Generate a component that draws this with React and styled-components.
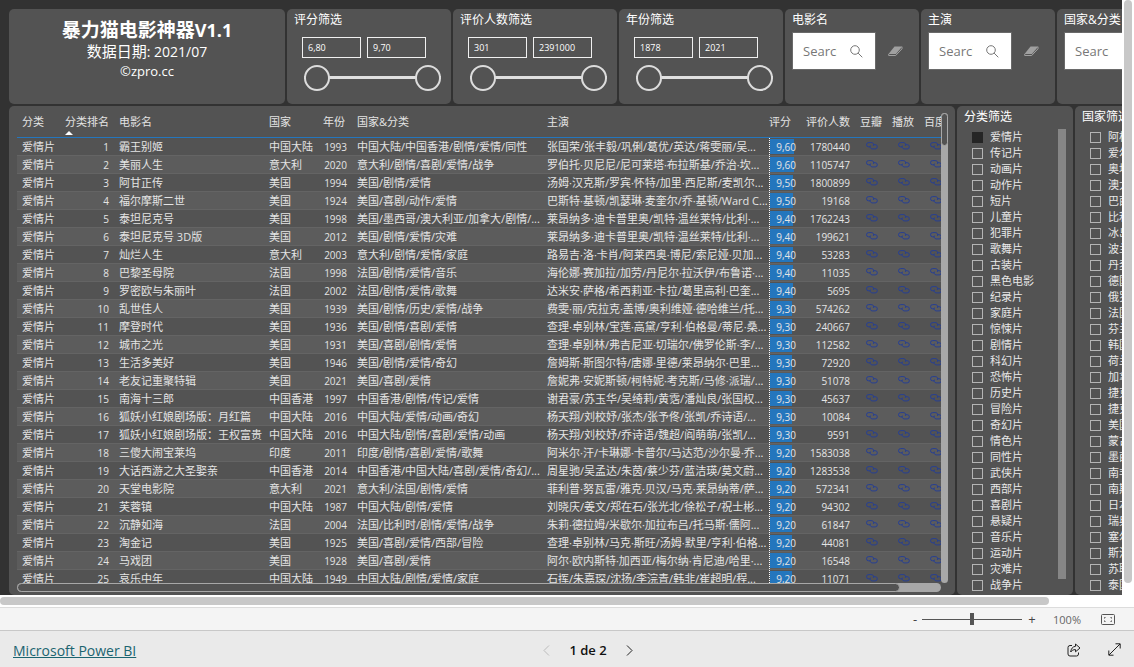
import React, { useState } from 'react'
import styled, { createGlobalStyle } from 'styled-components'

const GlobalStyle = createGlobalStyle`
  * {
    box-sizing: border-box;
  }
  body {
    margin: 0;
    background: #ffffff;
    font-family: "Open Sans", "Noto Sans CJK SC", sans-serif;
    color: #ffffff;
  }
  button, input {
    font-family: inherit;
  }
`;

const Page = styled.div`
  height: 100vh;
  display: flex;
  flex-direction: column;
  overflow: hidden;
`;

const Viewport = styled.div`
  flex: 1;
  min-height: 0;
  display: grid;
  grid-template-columns: minmax(0, 1fr) 12px;
  grid-template-rows: minmax(0, 1fr) 12px;
`;

const Canvas = styled.main`
  overflow: hidden;
  background: #323232;
`;

const Report = styled.div`
  width: 1200px;
  height: 100%;
  padding: 9px 9px 0;
  display: flex;
  flex-direction: column;
  gap: 2px;
`;

const PageScrollY = styled.div`
  width: 8px;
  height: 98%;
  margin-left: 2px;
  border-radius: 4px;
  background: #c8c8c8;
`;

const PageScrollX = styled.div`
  height: 8px;
  margin: 2px 73px 0 0;
  border-radius: 4px;
  background: #c8c8c8;
`;

const TopRow = styled.div`
  display: flex;
  gap: 2px;
  height: 95px;
`;

const BottomRow = styled.div`
  flex: 1;
  min-height: 0;
  display: flex;
  gap: 2px;
`;

const Panel = styled.section`
  flex: none;
  width: ${({ $width }) => $width}px;
  border-radius: 5px;
  background: #535353;
  overflow: hidden;
`;

const PanelTitle = styled.h2`
  margin: 0;
  padding: 2px 7px 0;
  font-size: 12px;
  line-height: 18px;
  font-weight: 400;
  white-space: nowrap;
`;

const TitlePanel = styled(Panel)`
  padding-top: 10px;
  text-align: center;
`;

const Title = styled.h1`
  margin: 0;
  font-size: 19px;
  line-height: 22px;
  font-weight: 700;
`;

const DateLine = styled.div`
  font-size: 15px;
  line-height: 20px;
`;

const Latin = styled.span`
  font-size: ${({ $size }) => $size}px;
`;

const Author = styled.div`
  font-size: 13px;
  line-height: 18px;
`;

const RangeBody = styled.div`
  padding: 8px 10px 0 15px;
`;

const RangeInputs = styled.div`
  display: flex;
  gap: 6px;
`;

const NumberBox = styled.input`
  width: 59px;
  height: 21px;
  padding: 0 5px;
  border: 1px solid #f0f0f0;
  border-radius: 0;
  background: transparent;
  color: #ffffff;
  font-size: 9px;
  outline: none;
`;

const DualSlider = styled.div`
  display: grid;
  margin: 7px 0 0 2px;
`;

const Range = styled.input`
  grid-area: 1 / 1;
  appearance: none;
  width: 100%;
  height: 26px;
  margin: 0;
  background: ${({ $line }) => ($line ? 'linear-gradient(#e0e0e0, #e0e0e0) no-repeat 0 11px / 100% 3px' : 'transparent')};
  pointer-events: none;
  &::-webkit-slider-thumb {
    appearance: none;
    width: 26px;
    height: 26px;
    border: 2px solid #dcdcdc;
    border-radius: 50%;
    background: #535353;
    pointer-events: auto;
  }
`;

const SearchRow = styled.div`
  display: flex;
  align-items: center;
  gap: 12px;
  padding: 3px 0 0 7px;
`;

const SearchBox = styled.div`
  display: flex;
  align-items: center;
  width: 84px;
  height: 38px;
  padding: 0 12px 0 10px;
  border: 1px solid #6a6a6a;
  background: #ffffff;
`;

const SearchInput = styled.input`
  flex: 1;
  width: 34px;
  min-width: 0;
  margin-right: 13px;
  padding: 0;
  border: 0;
  background: transparent;
  color: #333333;
  font-size: 13px;
  outline: none;
  &::placeholder {
    color: #777777;
  }
`;

const IconButton = styled.button`
  display: flex;
  padding: 0;
  border: 0;
  background: none;
  color: ${({ $color }) => $color || '#222222'};
  cursor: pointer;
`;

const TablePanel = styled(Panel)`
  display: grid;
  grid-template-columns: minmax(0, 1fr) 7px;
  grid-template-rows: minmax(0, 1fr) 9px;
  padding: 7px 7px 3px 8px;
`;

const TableClip = styled.div`
  overflow: hidden;
`;

const Table = styled.table`
  width: 934px;
  table-layout: fixed;
  border-collapse: separate;
  border-spacing: 0;
  font-size: 11px;
  color: #e4e4e4;
`;

const HeadCell = styled.th`
  height: 25px;
  padding: 0 0 0 5px;
  border-bottom: 1px solid #2476bd;
  line-height: 18px;
  font-weight: 400;
  text-align: left;
  vertical-align: top;
  white-space: nowrap;
`;

const SortArrow = styled.span`
  display: block;
  width: 8px;
  border: 4px solid transparent;
  border-top: 0;
  border-bottom-color: #ffffff;
`;

const Row = styled.tr`
  background: ${({ $even }) => ($even ? '#5c5c5c' : '#535353')};
`;

const Cell = styled.td`
  height: 18px;
  padding: 1px 5px 0;
  border-bottom: 1px solid #646464;
  line-height: 16px;
  white-space: nowrap;
`;

const NumCell = styled(Cell)`
  font-size: 10px;
  text-align: right;
`;

const RateCell = styled(NumCell)`
  padding-top: 0;
`;

const DataBar = styled.div`
  height: 17px;
  padding-top: 1px;
  border-left: 1px dotted #ffffff;
  background: linear-gradient(#2476bd, #2476bd) no-repeat 0 1px / ${({ $fill }) => $fill}px 15px;
`;

const IconCell = styled(Cell)`
  padding: 0 0 0 11px;
`;

const IconLink = styled.a`
  display: flex;
  height: 17px;
  padding-top: 4px;
  color: #263f95;
`;

const TableScrollY = styled.div`
  border-radius: 4px;
  background: #a8a8a8;
`;

const ThumbY = styled.div`
  height: 33px;
  border: 1px solid #a8a8a8;
  border-radius: 4px;
  background: #535353;
`;

const TableScrollX = styled.div`
  border-radius: 5px;
  background: #a8a8a8;
`;

const ThumbX = styled.div`
  width: 883px;
  height: 9px;
  border: 1px solid #a8a8a8;
  border-radius: 5px;
  background: #535353;
`;

const ListBody = styled.div`
  display: flex;
  justify-content: space-between;
  padding: 3px 7px 0 15px;
`;

const CheckList = styled.ul`
  margin: 0;
  padding: 0;
  list-style: none;
`;

const CheckItem = styled.label`
  display: flex;
  align-items: center;
  gap: 7px;
  height: 16px;
  color: #e8e8e8;
  font-size: 11px;
  line-height: 16px;
  white-space: nowrap;
`;

const CheckBox = styled.input`
  appearance: none;
  width: 11px;
  height: 11px;
  margin: 0;
  border: 1px solid #b4b4b4;
  &:checked {
    border-color: #252525;
    background: #252525;
  }
`;

const ListScroll = styled.div`
  width: 8px;
  height: 450px;
  background: #868686;
`;

const StatusBar = styled.div`
  display: flex;
  align-items: center;
  justify-content: flex-end;
  height: 24px;
  padding-right: 19px;
  border-top: 1px solid #dcdcdc;
  border-bottom: 1px solid #c8c8c8;
  background: #f4f4f4;
  color: #555555;
`;

const ZoomButton = styled.button`
  width: 14px;
  padding: 0;
  border: 0;
  background: none;
  color: #444444;
  font-size: 13px;
  line-height: 16px;
`;

const ZoomRange = styled.input`
  appearance: none;
  width: 100px;
  height: 12px;
  margin: 0 3px 0 0;
  background: linear-gradient(#555555, #555555) no-repeat 0 6px / 100% 1px;
  &::-webkit-slider-thumb {
    appearance: none;
    width: 4px;
    height: 12px;
    background: #555555;
  }
`;

const ZoomValue = styled.span`
  width: 48px;
  padding-left: 14px;
  margin-right: 14px;
  color: #666666;
  font-size: 11px;
`;

const Footer = styled.footer`
  display: grid;
  grid-template-columns: 1fr auto 1fr;
  align-items: center;
  height: 36px;
  padding: 2px 13px 0;
  background: #eaeaea;
  color: #111111;
`;

const BrandLink = styled.a`
  color: #1b6470;
  font-size: 14px;
`;

const Pager = styled.nav`
  display: flex;
  align-items: center;
  gap: 19px;
  margin-left: 42px;
  font-size: 13px;
  font-weight: 600;
`;

const FooterIcons = styled.div`
  display: flex;
  justify-content: flex-end;
  gap: 27px;
`;

const ranges = [
  { title: '评分筛选', from: '6,80', to: '9,70' },
  { title: '评价人数筛选', from: '301', to: '2391000' },
  { title: '年份筛选', from: '1878', to: '2021' },
];

const searches = ['电影名', '主演', '国家&分类'];

const widths = [43, 54, 150, 54, 34, 190, 222, 37, 54, 32, 32, 32];

const headers = ['分类', '分类排名', '电影名', '国家', '年份', '国家&分类', '主演', '评分', '评价人数', '豆瓣', '播放', '百度'];

// name, country, year, tags, cast, rating, votes
const movies = [
  ['霸王别姬', '中国大陆', 1993, '中国大陆/中国香港/剧情/爱情/同性', '张国荣/张丰毅/巩俐/葛优/英达/蒋雯丽/吴...', '9,60', 1780440],
  ['美丽人生', '意大利', 2020, '意大利/剧情/喜剧/爱情/战争', '罗伯托·贝尼尼/尼可莱塔·布拉斯基/乔治·坎...', '9,60', 1105747],
  ['阿甘正传', '美国', 1994, '美国/剧情/爱情', '汤姆·汉克斯/罗宾·怀特/加里·西尼斯/麦凯尔...', '9,50', 1800899],
  ['福尔摩斯二世', '美国', 1924, '美国/喜剧/动作/爱情', '巴斯特·基顿/凯瑟琳·麦奎尔/乔·基顿/Ward C...', '9,50', 19168],
  ['泰坦尼克号', '美国', 1998, '美国/墨西哥/澳大利亚/加拿大/剧情/...', '莱昂纳多·迪卡普里奥/凯特·温丝莱特/比利·...', '9,40', 1762243],
  ['泰坦尼克号 3D版', '美国', 2012, '美国/剧情/爱情/灾难', '莱昂纳多·迪卡普里奥/凯特·温丝莱特/比利·...', '9,40', 199621],
  ['灿烂人生', '意大利', 2003, '意大利/剧情/爱情/家庭', '路易吉·洛·卡肖/阿莱西奥·博尼/索尼娅·贝加...', '9,40', 53283],
  ['巴黎圣母院', '法国', 1998, '法国/剧情/爱情/音乐', '海伦娜·赛加拉/加劳/丹尼尔·拉沃伊/布鲁诺·...', '9,40', 11035],
  ['罗密欧与朱丽叶', '法国', 2002, '法国/剧情/爱情/歌舞', '达米安·萨格/希西莉亚·卡拉/葛里高利·巴奎...', '9,40', 5695],
  ['乱世佳人', '美国', 1939, '美国/剧情/历史/爱情/战争', '费雯·丽/克拉克·盖博/奥利维娅·德哈维兰/托...', '9,30', 574262],
  ['摩登时代', '美国', 1936, '美国/剧情/喜剧/爱情', '查理·卓别林/宝莲·高黛/亨利·伯格曼/蒂尼·桑...', '9,30', 240667],
  ['城市之光', '美国', 1931, '美国/喜剧/剧情/爱情', '查理·卓别林/弗吉尼亚·切瑞尔/佛罗伦斯·李/...', '9,30', 112582],
  ['生活多美好', '美国', 1946, '美国/剧情/爱情/奇幻', '詹姆斯·斯图尔特/唐娜·里德/莱昂纳尔·巴里...', '9,30', 72920],
  ['老友记重聚特辑', '美国', 2021, '美国/喜剧/爱情', '詹妮弗·安妮斯顿/柯特妮·考克斯/马修·派瑞/...', '9,30', 51078],
  ['南海十三郎', '中国香港', 1997, '中国香港/剧情/传记/爱情', '谢君豪/苏玉华/吴绮莉/黄霑/潘灿良/张国权...', '9,30', 45637],
  ['狐妖小红娘剧场版：月红篇', '中国大陆', 2016, '中国大陆/爱情/动画/奇幻', '杨天翔/刘校妤/张杰/张予佟/张凯/乔诗语/...', '9,30', 10084],
  ['狐妖小红娘剧场版：王权富贵', '中国大陆', 2016, '中国大陆/剧情/喜剧/爱情/动画', '杨天翔/刘校妤/乔诗语/魏超/阎萌萌/张凯/...', '9,30', 9591],
  ['三傻大闹宝莱坞', '印度', 2011, '印度/剧情/喜剧/爱情/歌舞', '阿米尔·汗/卡琳娜·卡普尔/马达范/沙尔曼·乔...', '9,20', 1583038],
  ['大话西游之大圣娶亲', '中国香港', 2014, '中国香港/中国大陆/喜剧/爱情/奇幻/...', '周星驰/吴孟达/朱茵/蔡少芬/蓝洁瑛/莫文蔚...', '9,20', 1283538],
  ['天堂电影院', '意大利', 2021, '意大利/法国/剧情/爱情', '菲利普·努瓦雷/雅克·贝汉/马克·莱昂纳蒂/萨...', '9,20', 572341],
  ['芙蓉镇', '中国大陆', 1987, '中国大陆/剧情/爱情', '刘晓庆/姜文/郑在石/张光北/徐松子/祝士彬...', '9,20', 94302],
  ['沉静如海', '法国', 2004, '法国/比利时/剧情/爱情/战争', '朱莉·德拉姆/米歇尔·加拉布吕/托马斯·儒阿...', '9,20', 61847],
  ['淘金记', '美国', 1925, '美国/喜剧/爱情/西部/冒险', '查理·卓别林/马克·斯旺/汤姆·默里/亨利·伯格...', '9,20', 44081],
  ['马戏团', '美国', 1928, '美国/喜剧/爱情', '阿尔·欧内斯特·加西亚/梅尔纳·肯尼迪/哈里·...', '9,20', 16548],
  ['哀乐中年', '中国大陆', 1949, '中国大陆/剧情/爱情/家庭', '石挥/朱嘉琛/沈扬/李浣青/韩非/崔超明/程...', '9,20', 11071],
];

const categories = [
  '爱情片', '传记片', '动画片', '动作片', '短片', '儿童片', '犯罪片', '歌舞片', '古装片', '黑色电影',
  '纪录片', '家庭片', '惊悚片', '剧情片', '科幻片', '恐怖片', '历史片', '冒险片', '奇幻片', '情色片',
  '同性片', '武侠片', '西部片', '喜剧片', '悬疑片', '音乐片', '运动片', '灾难片', '战争片',
];

const countries = [
  '阿根廷', '爱尔兰', '奥地利', '澳大利亚', '巴西', '比利时', '冰岛', '波兰', '丹麦', '德国',
  '俄罗斯', '法国', '芬兰', '韩国', '荷兰', '加拿大', '捷克', '捷克斯洛伐克', '美国', '蒙古',
  '墨西哥', '南非', '南斯拉夫', '日本', '瑞典', '塞尔维亚', '斯洛文尼亚', '苏联', '泰国',
];

const barWidth = (rating) => Math.round(parseFloat(rating.replace(',', '.')) * 4 - 14.8);

const ChainIcon = () => (
  <svg width="12" height="8" viewBox="0 0 12 8" fill="none" stroke="currentColor">
    <path d="M4.5 4.8H2.6A2.1 2.1 0 0 1 2.6.6h3A2.1 2.1 0 0 1 7.3 3.9" />
    <path d="M7.4 2.7H9.2a2.1 2.1 0 0 1 0 4.2H6.2A2.1 2.1 0 0 1 4.5 3.6" />
  </svg>
);

const SearchIcon = () => (
  <svg width="13" height="13" viewBox="0 0 13 13" fill="none" stroke="currentColor">
    <circle cx="5" cy="5" r="4.3" />
    <path d="M8.1 8.1L12.3 12.3" />
  </svg>
);

const EraserIcon = () => (
  <svg width="15" height="11" viewBox="0 0 15 11">
    <path d="M6.5.5H14.3L8 8H.5Z" fill="currentColor" />
    <path d="M.7 8V9.5H7.7L14 2.8V.8" fill="none" stroke="currentColor" />
  </svg>
);

const FitIcon = () => (
  <svg width="14" height="11" viewBox="0 0 14 11" fill="none" stroke="currentColor">
    <rect x=".5" y=".5" width="13" height="10" rx="1" />
    <path d="M3.5 4.5V3.5H4.5M9.5 3.5H10.5V4.5M10.5 6.5V7.5H9.5M4.5 7.5H3.5V6.5" />
  </svg>
);

const ShareIcon = () => (
  <svg width="14" height="14" viewBox="0 0 14 14" fill="none" stroke="currentColor" strokeLinejoin="round">
    <path d="M5 2.5H3A2 2 0 0 0 1 4.5V11a2 2 0 0 0 2 2H9.5a2 2 0 0 0 2-2V9.5" />
    <path d="M8.5 1L13 5L8.5 8.8V6.6C6.3 6.5 4.8 7.5 3.7 9C4 5.8 5.6 3.6 8.5 3.3Z" />
  </svg>
);

const ExpandIcon = () => (
  <svg width="13" height="13" viewBox="0 0 13 13" fill="none" stroke="currentColor">
    <path d="M1 12L12 1M7.5.8H12.2V5.5M.8 7.5V12.2H5.5" />
  </svg>
);

const Chevron = ({ d }) => (
  <svg width="7" height="11" viewBox="0 0 7 11" fill="none" stroke="currentColor">
    <path d={d} />
  </svg>
);

const RangeFilter = ({ title, from, to }) => {
  const [low, setLow] = useState(from);
  const [high, setHigh] = useState(to);

  return (
    <Panel $width={164}>
      <PanelTitle>{title}</PanelTitle>
      <RangeBody>
        <RangeInputs>
          <NumberBox aria-label={`${title} min`} value={low} onChange={(e) => setLow(e.target.value)} />
          <NumberBox aria-label={`${title} max`} value={high} onChange={(e) => setHigh(e.target.value)} />
        </RangeInputs>
        <DualSlider>
          <Range type="range" $line defaultValue="0" aria-label={`${title} min`} />
          <Range type="range" defaultValue="100" aria-label={`${title} max`} />
        </DualSlider>
      </RangeBody>
    </Panel>
  );
};

const SearchFilter = ({ title }) => (
  <Panel $width={134}>
    <PanelTitle>{title}</PanelTitle>
    <SearchRow>
      <SearchBox>
        <SearchInput placeholder="Search" aria-label={title} />
        <IconButton $color="#777777" aria-label="Search"><SearchIcon /></IconButton>
      </SearchBox>
      <IconButton $color="#a0a0a0" aria-label="Clear"><EraserIcon /></IconButton>
    </SearchRow>
  </Panel>
);

const ListFilter = ({ title, items, initial }) => {
  const [selected, setSelected] = useState(initial);

  return (
    <Panel $width={116}>
      <PanelTitle>{title}</PanelTitle>
      <ListBody>
        <CheckList>
          {items.map((item) => (
            <li key={item}>
              <CheckItem>
                <CheckBox
                  type="checkbox"
                  checked={selected === item}
                  onChange={() => setSelected(selected === item ? '' : item)}
                />
                {item}
              </CheckItem>
            </li>
          ))}
        </CheckList>
        <ListScroll />
      </ListBody>
    </Panel>
  );
};

const MovieTable = () => (
  <TablePanel $width={946}>
    <TableClip>
      <Table>
        <colgroup>
          {widths.map((width, i) => <col key={i} width={width} />)}
        </colgroup>
        <thead>
          <tr>
            {headers.map((header) => (
              <HeadCell key={header} scope="col">
                {header}
                {header === '分类排名' && <SortArrow />}
              </HeadCell>
            ))}
          </tr>
        </thead>
        <tbody>
          {movies.map(([name, country, year, tags, cast, rating, votes], i) => (
            <Row key={name} $even={i % 2 === 1}>
              <Cell>爱情片</Cell>
              <NumCell>{i + 1}</NumCell>
              <Cell>{name}</Cell>
              <Cell>{country}</Cell>
              <NumCell>{year}</NumCell>
              <Cell>{tags}</Cell>
              <Cell>{cast}</Cell>
              <RateCell><DataBar $fill={barWidth(rating)}>{rating}</DataBar></RateCell>
              <NumCell>{votes}</NumCell>
              {['豆瓣', '播放', '百度'].map((site) => (
                <IconCell key={site}>
                  <IconLink href="#" aria-label={`${name} ${site}`}><ChainIcon /></IconLink>
                </IconCell>
              ))}
            </Row>
          ))}
        </tbody>
      </Table>
    </TableClip>
    <TableScrollY><ThumbY /></TableScrollY>
    <TableScrollX><ThumbX /></TableScrollX>
  </TablePanel>
);

const App = () => {
  const [zoom, setZoom] = useState(100);

  return (
    <Page>
      <GlobalStyle />
      <Viewport>
        <Canvas>
          <Report>
            <TopRow>
              <TitlePanel $width={276}>
                <Title>暴力猫电影神器<Latin $size={18}>V1.1</Latin></Title>
                <DateLine>数据日期<Latin $size={14}>: 2021/07</Latin></DateLine>
                <Author>©zpro.cc</Author>
              </TitlePanel>
              {ranges.map((range) => <RangeFilter key={range.title} {...range} />)}
              {searches.map((title) => <SearchFilter key={title} title={title} />)}
            </TopRow>
            <BottomRow>
              <MovieTable />
              <ListFilter title="分类筛选" items={categories} initial="爱情片" />
              <ListFilter title="国家筛选" items={countries} initial="" />
            </BottomRow>
          </Report>
        </Canvas>
        <PageScrollY />
        <PageScrollX />
      </Viewport>
      <StatusBar>
        <ZoomButton aria-label="Zoom out" onClick={() => setZoom(zoom - 10)}>-</ZoomButton>
        <ZoomRange
          type="range"
          min="0"
          max="200"
          aria-label="Zoom"
          value={zoom}
          onChange={(e) => setZoom(Number(e.target.value))}
        />
        <ZoomButton aria-label="Zoom in" onClick={() => setZoom(zoom + 10)}>+</ZoomButton>
        <ZoomValue>{zoom}%</ZoomValue>
        <IconButton $color="#555555" aria-label="Fit to page"><FitIcon /></IconButton>
      </StatusBar>
      <Footer>
        <div><BrandLink href="#">Microsoft Power BI</BrandLink></div>
        <Pager>
          <IconButton $color="#bbbbbb" aria-label="Previous page"><Chevron d="M6 .5L1 5.5L6 10.5" /></IconButton>
          <span>1 de 2</span>
          <IconButton aria-label="Next page"><Chevron d="M1 .5L6 5.5L1 10.5" /></IconButton>
        </Pager>
        <FooterIcons>
          <IconButton aria-label="Share"><ShareIcon /></IconButton>
          <IconButton aria-label="Full screen"><ExpandIcon /></IconButton>
        </FooterIcons>
      </Footer>
    </Page>
  );
};

export default App
